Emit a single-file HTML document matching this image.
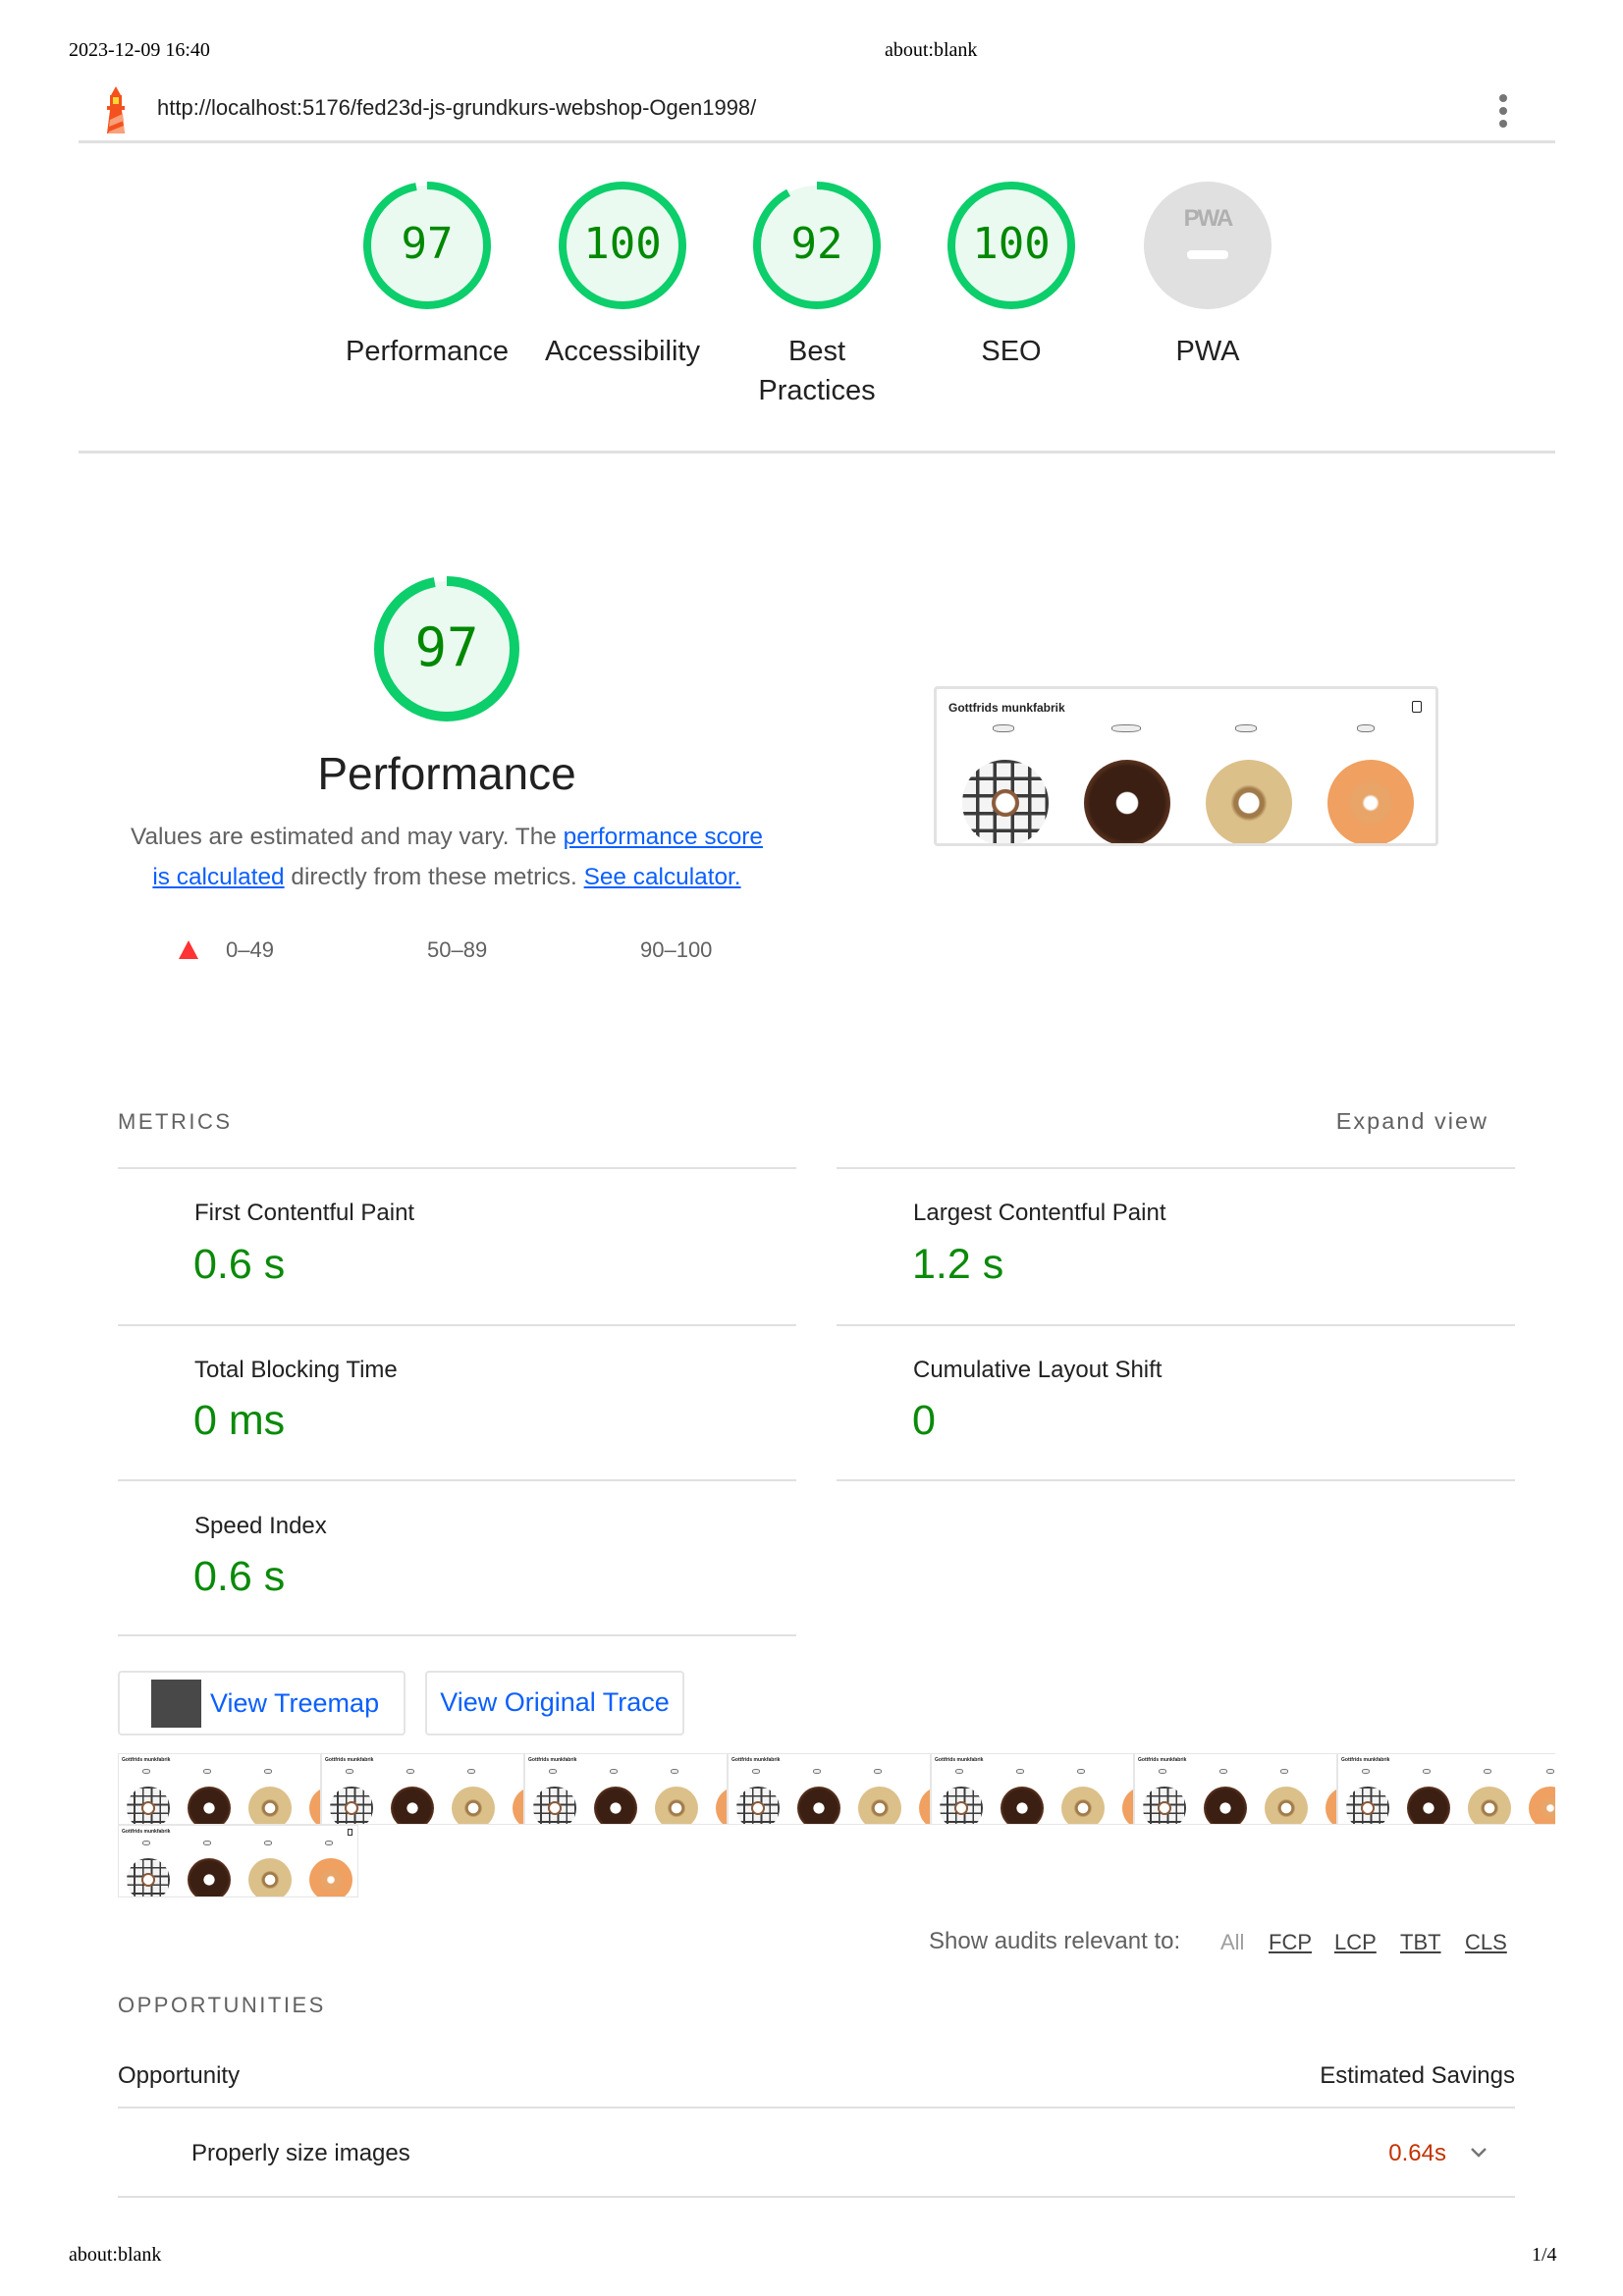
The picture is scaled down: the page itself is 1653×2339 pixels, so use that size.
<!DOCTYPE html>
<html><head><meta charset="utf-8"><style>
*{margin:0;padding:0;box-sizing:border-box}
body{width:1653px;height:2339px;background:#fff;position:relative;font-family:"Liberation Sans",sans-serif;color:#212121;overflow:hidden}
.a{position:absolute;white-space:nowrap}
.serif{font-family:"Liberation Serif",serif;font-size:20px;color:#000}
.hl{position:absolute;height:2px;background:#e0e0e0}
.glab{position:absolute;width:180px;text-align:center;font-size:29px;line-height:40px;color:#212121}
.gnum{position:absolute;width:130px;text-align:center;font-family:"DejaVu Sans Mono",monospace;font-size:44px;color:#008800}
.ml{font-size:24px;color:#212121}
.mv{font-size:43px;color:#0a8a0a}
.frame{position:absolute;background:#fff;overflow:hidden;border:1px solid #e6e6e6}
.d{position:absolute;border-radius:50%}
.w{background:radial-gradient(circle at 50% 50%,#fff 0 15%,#8a5a3a 17% 22%,transparent 23%),repeating-linear-gradient(90deg,transparent 0 16%,#3b3b3b 16% 20%),repeating-linear-gradient(0deg,#f4f4f4 0 16%,#3b3b3b 16% 20%)}
.c{background:radial-gradient(circle,#fff 0 17%,#3a1f12 19% 60%,#5a3220 70%,#3b2014 100%)}
.n{background:radial-gradient(circle,#fff 0 16%,#a07a48 18% 24%,#dcc08a 30% 70%,#c9a46a 100%)}
.o{background:radial-gradient(circle,#fff 0 10%,#e9a468 14% 30%,#f0a060 40% 80%,#e88a48 100%)}
.p{position:absolute;border:1px solid #777;border-radius:40%;background:#eee}
.ft{position:absolute;font-size:7px;font-weight:bold;color:#222}
.btn{position:absolute;border:2px solid #e4e4e4;border-radius:4px;color:#0b5fff;font-size:27px;line-height:60px}
.lk{color:#0b5fff;text-decoration:underline}
.fl{position:absolute;font-size:22px;color:#424242;text-decoration:underline}
</style></head><body>

<div class="a serif" style="left:70px;top:40px">2023-12-09 16:40</div>
<div class="a serif" style="left:901px;top:40px">about:blank</div>

<svg class="a" style="left:103px;top:88px" width="30" height="48" viewBox="0 0 30 48">
<polygon points="15,0 10,9 20,9" fill="#f4511e"/>
<rect x="9" y="9" width="12" height="12" fill="#f4511e"/>
<rect x="12" y="11" width="6" height="7" fill="#fdd835"/>
<rect x="6" y="20" width="18" height="4" fill="#f4511e"/>
<polygon points="9,24 21,24 24,48 6,48" fill="#f4511e"/>
<polygon points="9,34 22,28 23,35 8,41" fill="#f8a07a"/>
<polygon points="8,46 23,40 24,48 7,48" fill="#f8a07a"/>
</svg>
<div class="a" style="left:160px;top:97px;font-size:22px;color:#212121">http://localhost:5176/fed23d-js-grundkurs-webshop-Ogen1998/</div>
<div class="a" style="left:1527px;top:96px;width:8px"><div style="width:8px;height:8px;border-radius:50%;background:#757575;margin-bottom:5px"></div><div style="width:8px;height:8px;border-radius:50%;background:#757575;margin-bottom:5px"></div><div style="width:8px;height:8px;border-radius:50%;background:#757575"></div></div>
<div class="hl" style="left:80px;width:1504px;top:143px;height:3px"></div>

<svg class="a" style="left:0;top:0" width="1653" height="330">
<g fill="#eafaf0" stroke="#0cce6b" stroke-width="8">
<circle cx="435" cy="250" r="61" stroke-dasharray="372 384" transform="rotate(-90 435 250)"/>
<circle cx="634" cy="250" r="61"/>
<circle cx="832" cy="250" r="61" stroke-dasharray="353 384" transform="rotate(-90 832 250)"/>
<circle cx="1030" cy="250" r="61"/>
</g>
<circle cx="1230" cy="250" r="65" fill="#e0e0e0"/>
<text x="1230" y="230" text-anchor="middle" font-family="Liberation Sans" font-weight="bold" font-size="24" fill="#b0b0b0" letter-spacing="-2">PWA</text>
<rect x="1209" y="255" width="42" height="9" rx="4" fill="#fff"/>
</svg>
<div class="gnum" style="left:370px;top:223px">97</div>
<div class="gnum" style="left:569px;top:223px">100</div>
<div class="gnum" style="left:767px;top:223px">92</div>
<div class="gnum" style="left:965px;top:223px">100</div>
<div class="glab" style="left:345px;top:338px">Performance</div>
<div class="glab" style="left:544px;top:338px">Accessibility</div>
<div class="glab" style="left:742px;top:338px">Best<br>Practices</div>
<div class="glab" style="left:940px;top:338px">SEO</div>
<div class="glab" style="left:1140px;top:338px">PWA</div>
<div class="hl" style="left:80px;width:1504px;top:459px;height:3px"></div>

<svg class="a" style="left:370px;top:576px" width="170" height="170">
<circle cx="85" cy="85" r="69" fill="#eafaf0" stroke="#0cce6b" stroke-width="10" stroke-dasharray="421 434" transform="rotate(-90 85 85)"/>
</svg>
<div class="a" style="left:370px;top:628px;width:170px;text-align:center;font-family:'DejaVu Sans Mono',monospace;font-size:54px;color:#008800">97</div>
<div class="a" style="left:255px;top:761px;width:400px;text-align:center;font-size:46px;color:#212121">Performance</div>
<div class="a" style="left:80px;top:832px;width:750px;text-align:center;font-size:24.4px;line-height:41px;color:#616161;white-space:normal">Values are estimated and may vary. The <span class="lk">performance score<br>is calculated</span> directly from these metrics. <span class="lk">See calculator.</span></div>
<svg class="a" style="left:182px;top:958px" width="20" height="20"><polygon points="10,0 20,19 0,19" fill="#ff3333"/></svg>
<div class="a" style="left:230px;top:955px;font-size:22px;color:#616161">0–49</div>
<div class="a" style="left:435px;top:955px;font-size:22px;color:#616161">50–89</div>
<div class="a" style="left:652px;top:955px;font-size:22px;color:#616161">90–100</div>

<div class="frame" style="left:951px;top:699px;width:514px;height:163px;border:3px solid #e2e2e2;border-radius:4px">
<div class="ft" style="left:12px;top:12px;font-size:12px">Gottfrids munkfabrik</div>
<div class="a" style="left:484px;top:12px;width:10px;height:12px;border:1.5px solid #222;border-radius:2px"></div>
<div class="p" style="left:57px;top:36px;width:22px;height:8px"></div>
<div class="p" style="left:178px;top:36px;width:30px;height:8px"></div>
<div class="p" style="left:304px;top:36px;width:22px;height:8px"></div>
<div class="p" style="left:428px;top:36px;width:18px;height:8px"></div>
<div class="d w" style="left:26px;top:72px;width:88px;height:88px"></div>
<div class="d c" style="left:150px;top:72px;width:88px;height:88px"></div>
<div class="d n" style="left:274px;top:72px;width:88px;height:88px"></div>
<div class="d o" style="left:398px;top:72px;width:88px;height:88px"></div>
</div>

<div class="a" style="left:120px;top:1130px;font-size:22px;letter-spacing:2.5px;color:#616161">METRICS</div>
<div class="a" style="left:1316px;top:1129px;width:200px;text-align:right;font-size:23.5px;letter-spacing:2px;color:#616161">Expand view</div>
<div class="hl" style="left:120px;width:691px;top:1189px"></div>
<div class="hl" style="left:852px;width:691px;top:1189px"></div>
<div class="hl" style="left:120px;width:691px;top:1349px"></div>
<div class="hl" style="left:852px;width:691px;top:1349px"></div>
<div class="hl" style="left:120px;width:691px;top:1507px"></div>
<div class="hl" style="left:852px;width:691px;top:1507px"></div>
<div class="hl" style="left:120px;width:691px;top:1665px"></div>
<div class="a ml" style="left:198px;top:1222px">First Contentful Paint</div>
<div class="a mv" style="left:197px;top:1264px">0.6 s</div>
<div class="a ml" style="left:930px;top:1222px">Largest Contentful Paint</div>
<div class="a mv" style="left:929px;top:1264px">1.2 s</div>
<div class="a ml" style="left:198px;top:1382px">Total Blocking Time</div>
<div class="a mv" style="left:197px;top:1423px">0 ms</div>
<div class="a ml" style="left:930px;top:1382px">Cumulative Layout Shift</div>
<div class="a mv" style="left:929px;top:1423px">0</div>
<div class="a ml" style="left:198px;top:1541px">Speed Index</div>
<div class="a mv" style="left:197px;top:1582px">0.6 s</div>

<div class="btn" style="left:120px;top:1702px;width:293px;height:66px"><span style="position:absolute;left:32px;top:7px;width:51px;height:49px;background:#484848"></span><span style="position:absolute;left:92px;top:1px">View Treemap</span></div>
<div class="btn" style="left:433px;top:1702px;width:264px;height:66px;text-align:center">View Original Trace</div>

<div class="a" style="left:120px;top:1786px;width:1464px;height:73px;overflow:hidden">
<div style="position:relative;width:1500px;height:73px">
<div class="frame" style="left:0;top:0;width:207px;height:73px"><div class="ft" style="left:3px;top:3px;font-size:5px">Gottfrids munkfabrik</div><div class="p" style="left:24px;top:15px;width:8px;height:5px"></div><div class="p" style="left:86px;top:15px;width:8px;height:5px"></div><div class="p" style="left:148px;top:15px;width:8px;height:5px"></div><div class="d w" style="left:8px;top:33px;width:44px;height:44px"></div><div class="d c" style="left:70px;top:33px;width:44px;height:44px"></div><div class="d n" style="left:132px;top:33px;width:44px;height:44px"></div><div class="d o" style="left:194px;top:33px;width:44px;height:44px"></div></div>
<div class="frame" style="left:207px;top:0;width:207px;height:73px"><div class="ft" style="left:3px;top:3px;font-size:5px">Gottfrids munkfabrik</div><div class="p" style="left:24px;top:15px;width:8px;height:5px"></div><div class="p" style="left:86px;top:15px;width:8px;height:5px"></div><div class="p" style="left:148px;top:15px;width:8px;height:5px"></div><div class="d w" style="left:8px;top:33px;width:44px;height:44px"></div><div class="d c" style="left:70px;top:33px;width:44px;height:44px"></div><div class="d n" style="left:132px;top:33px;width:44px;height:44px"></div><div class="d o" style="left:194px;top:33px;width:44px;height:44px"></div></div>
<div class="frame" style="left:414px;top:0;width:207px;height:73px"><div class="ft" style="left:3px;top:3px;font-size:5px">Gottfrids munkfabrik</div><div class="p" style="left:24px;top:15px;width:8px;height:5px"></div><div class="p" style="left:86px;top:15px;width:8px;height:5px"></div><div class="p" style="left:148px;top:15px;width:8px;height:5px"></div><div class="d w" style="left:8px;top:33px;width:44px;height:44px"></div><div class="d c" style="left:70px;top:33px;width:44px;height:44px"></div><div class="d n" style="left:132px;top:33px;width:44px;height:44px"></div><div class="d o" style="left:194px;top:33px;width:44px;height:44px"></div></div>
<div class="frame" style="left:621px;top:0;width:207px;height:73px"><div class="ft" style="left:3px;top:3px;font-size:5px">Gottfrids munkfabrik</div><div class="p" style="left:24px;top:15px;width:8px;height:5px"></div><div class="p" style="left:86px;top:15px;width:8px;height:5px"></div><div class="p" style="left:148px;top:15px;width:8px;height:5px"></div><div class="d w" style="left:8px;top:33px;width:44px;height:44px"></div><div class="d c" style="left:70px;top:33px;width:44px;height:44px"></div><div class="d n" style="left:132px;top:33px;width:44px;height:44px"></div><div class="d o" style="left:194px;top:33px;width:44px;height:44px"></div></div>
<div class="frame" style="left:828px;top:0;width:207px;height:73px"><div class="ft" style="left:3px;top:3px;font-size:5px">Gottfrids munkfabrik</div><div class="p" style="left:24px;top:15px;width:8px;height:5px"></div><div class="p" style="left:86px;top:15px;width:8px;height:5px"></div><div class="p" style="left:148px;top:15px;width:8px;height:5px"></div><div class="d w" style="left:8px;top:33px;width:44px;height:44px"></div><div class="d c" style="left:70px;top:33px;width:44px;height:44px"></div><div class="d n" style="left:132px;top:33px;width:44px;height:44px"></div><div class="d o" style="left:194px;top:33px;width:44px;height:44px"></div></div>
<div class="frame" style="left:1035px;top:0;width:207px;height:73px"><div class="ft" style="left:3px;top:3px;font-size:5px">Gottfrids munkfabrik</div><div class="p" style="left:24px;top:15px;width:8px;height:5px"></div><div class="p" style="left:86px;top:15px;width:8px;height:5px"></div><div class="p" style="left:148px;top:15px;width:8px;height:5px"></div><div class="d w" style="left:8px;top:33px;width:44px;height:44px"></div><div class="d c" style="left:70px;top:33px;width:44px;height:44px"></div><div class="d n" style="left:132px;top:33px;width:44px;height:44px"></div><div class="d o" style="left:194px;top:33px;width:44px;height:44px"></div></div>
<div class="frame" style="left:1242px;top:0;width:245px;height:73px"><div class="ft" style="left:3px;top:3px;font-size:5px">Gottfrids munkfabrik</div><div class="p" style="left:24px;top:15px;width:8px;height:5px"></div><div class="p" style="left:86px;top:15px;width:8px;height:5px"></div><div class="p" style="left:148px;top:15px;width:8px;height:5px"></div><div class="p" style="left:212px;top:15px;width:8px;height:5px"></div><div class="d w" style="left:8px;top:33px;width:44px;height:44px"></div><div class="d c" style="left:70px;top:33px;width:44px;height:44px"></div><div class="d n" style="left:132px;top:33px;width:44px;height:44px"></div><div class="d o" style="left:194px;top:33px;width:44px;height:44px"></div></div>
</div></div>
<div class="frame" style="left:120px;top:1859px;width:245px;height:74px"><div class="ft" style="left:3px;top:3px;font-size:5px">Gottfrids munkfabrik</div><div class="a" style="left:233px;top:3px;width:5px;height:7px;border:1px solid #333"></div><div class="p" style="left:24px;top:15px;width:8px;height:5px"></div><div class="p" style="left:86px;top:15px;width:8px;height:5px"></div><div class="p" style="left:148px;top:15px;width:8px;height:5px"></div><div class="p" style="left:210px;top:15px;width:8px;height:5px"></div><div class="d w" style="left:8px;top:33px;width:44px;height:44px"></div><div class="d c" style="left:70px;top:33px;width:44px;height:44px"></div><div class="d n" style="left:132px;top:33px;width:44px;height:44px"></div><div class="d o" style="left:194px;top:33px;width:44px;height:44px"></div></div>

<div class="a" style="left:946px;top:1964px;font-size:24px;color:#616161">Show audits relevant to:</div>
<div class="a" style="left:1243px;top:1966px;font-size:22px;color:#9e9e9e">All</div>
<div class="fl" style="left:1292px;top:1966px">FCP</div>
<div class="fl" style="left:1359px;top:1966px">LCP</div>
<div class="fl" style="left:1426px;top:1966px">TBT</div>
<div class="fl" style="left:1492px;top:1966px">CLS</div>

<div class="a" style="left:120px;top:2030px;font-size:22px;letter-spacing:2.5px;color:#616161">OPPORTUNITIES</div>
<div class="a" style="left:120px;top:2101px;font-size:24px">Opportunity</div>
<div class="a" style="left:1243px;top:2101px;width:300px;text-align:right;font-size:24px">Estimated Savings</div>
<div class="hl" style="left:120px;width:1423px;top:2146px"></div>
<div class="a" style="left:195px;top:2180px;font-size:24px">Properly size images</div>
<div class="a" style="left:1373px;top:2180px;width:100px;text-align:right;font-size:24px;color:#c33300">0.64s</div>
<svg class="a" style="left:1497px;top:2186px" width="18" height="14"><polyline points="2,3 9,10 16,3" fill="none" stroke="#757575" stroke-width="2.5"/></svg>
<div class="hl" style="left:120px;width:1423px;top:2237px"></div>

<div class="a serif" style="left:70px;top:2286px">about:blank</div>
<div class="a serif" style="left:1560px;top:2286px">1/4</div>
</body></html>
